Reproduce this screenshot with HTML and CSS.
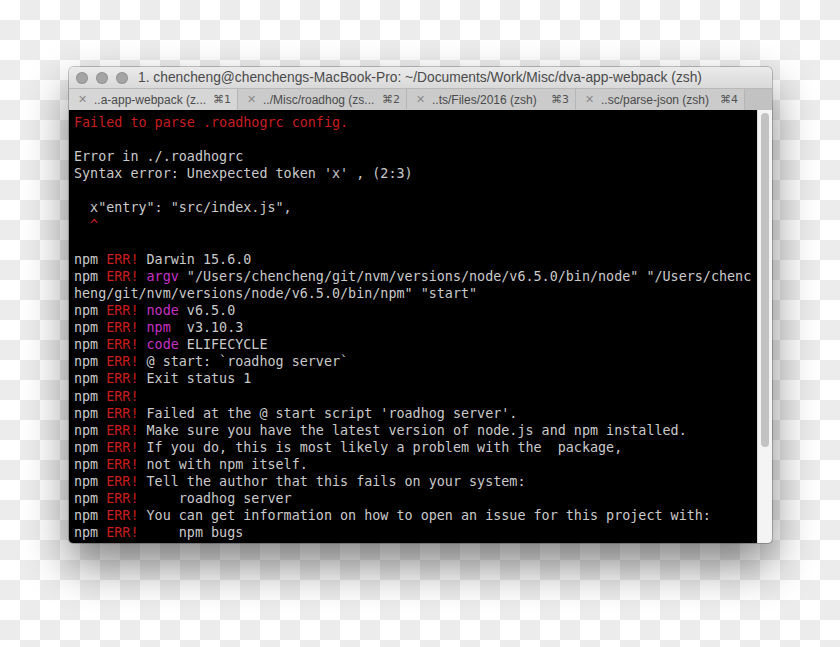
FILE: index.html
```html
<!DOCTYPE html>
<html lang="en">
<head>
    <meta charset="UTF-8">
    <meta name="viewport" content="width=device-width, initial-scale=1.0">
    <title>Terminal</title>
    <link rel="stylesheet" href="styles.css">
</head>
<body>
    <div class="window">
        <!-- Title bar -->
        <div class="titlebar">
            <div class="lights">
                <span class="light"></span>
                <span class="light"></span>
                <span class="light"></span>
            </div>
            <div class="title">1. chencheng@chenchengs-MacBook-Pro: ~/Documents/Work/Misc/dva-app-webpack (zsh)</div>
        </div>

        <!-- Tabs -->
        <div class="tabbar">
            <div class="tab active">
                <span class="tab-close">&#x2715;</span>
                <span class="tab-name">..a-app-webpack (z...</span>
                <span class="tab-key">&#x2318;1</span>
            </div>
            <div class="tab">
                <span class="tab-close">&#x2715;</span>
                <span class="tab-name">../Misc/roadhog (zs...</span>
                <span class="tab-key">&#x2318;2</span>
            </div>
            <div class="tab">
                <span class="tab-close">&#x2715;</span>
                <span class="tab-name">..ts/Files/2016 (zsh)</span>
                <span class="tab-key">&#x2318;3</span>
            </div>
            <div class="tab">
                <span class="tab-close">&#x2715;</span>
                <span class="tab-name">..sc/parse-json (zsh)</span>
                <span class="tab-key">&#x2318;4</span>
            </div>
            <div class="tab-rest"></div>
        </div>

        <!-- Terminal output -->
        <div class="screen">
            <div class="output">
                <div class="line red">Failed to parse .roadhogrc config.</div>
                <div class="line"></div>
                <div class="line">Error in ./.roadhogrc</div>
                <div class="line">Syntax error: Unexpected token 'x' , (2:3)</div>
                <div class="line"></div>
                <div class="line">  x"entry": "src/index.js",</div>
                <div class="line red">  ^</div>
                <div class="line"></div>
                <div class="line">npm <span class="red">ERR!</span> Darwin 15.6.0</div>
                <div class="line">npm <span class="red">ERR!</span> <span class="pink">argv</span> "/Users/chencheng/git/nvm/versions/node/v6.5.0/bin/node" "/Users/chenc</div>
                <div class="line">heng/git/nvm/versions/node/v6.5.0/bin/npm" "start"</div>
                <div class="line">npm <span class="red">ERR!</span> <span class="pink">node</span> v6.5.0</div>
                <div class="line">npm <span class="red">ERR!</span> <span class="pink">npm</span>  v3.10.3</div>
                <div class="line">npm <span class="red">ERR!</span> <span class="pink">code</span> ELIFECYCLE</div>
                <div class="line">npm <span class="red">ERR!</span> @ start: `roadhog server`</div>
                <div class="line">npm <span class="red">ERR!</span> Exit status 1</div>
                <div class="line">npm <span class="red">ERR!</span></div>
                <div class="line">npm <span class="red">ERR!</span> Failed at the @ start script 'roadhog server'.</div>
                <div class="line">npm <span class="red">ERR!</span> Make sure you have the latest version of node.js and npm installed.</div>
                <div class="line">npm <span class="red">ERR!</span> If you do, this is most likely a problem with the  package,</div>
                <div class="line">npm <span class="red">ERR!</span> not with npm itself.</div>
                <div class="line">npm <span class="red">ERR!</span> Tell the author that this fails on your system:</div>
                <div class="line">npm <span class="red">ERR!</span>     roadhog server</div>
                <div class="line">npm <span class="red">ERR!</span> You can get information on how to open an issue for this project with:</div>
                <div class="line">npm <span class="red">ERR!</span>     npm bugs</div>
            </div>
            <div class="scrollbar">
                <div class="thumb"></div>
            </div>
        </div>
    </div>
</body>
</html>
```

FILE: styles.css
```css
/* Transparent-style checker background */
body {
    margin: 0;
    padding: 67px 0 0 69px;
    min-height: 647px;
    box-sizing: border-box;
    background: repeating-conic-gradient(#ececec 0 25%, #ffffff 0 50%) 0 0 / 40px 40px;
    font-family: "Liberation Sans", Arial, sans-serif;
}

.window {
    width: 703px;
    height: 476px;
    display: flex;
    flex-direction: column;
    border-radius: 5px 5px 4px 4px;
    overflow: hidden;
    box-shadow: 0 0 0 1px rgba(0, 0, 0, 0.22), 0 22px 45px rgba(0, 0, 0, 0.48);
}

.titlebar {
    height: 21px;
    display: flex;
    align-items: center;
    background: linear-gradient(#ebebeb, #d9d9d9);
    padding-left: 7px;
}

.lights {
    display: flex;
    gap: 8px;
    margin-right: 10px;
}

.light {
    width: 12px;
    height: 12px;
    border-radius: 50%;
    background-color: #a4a4a4;
    box-shadow: inset 0 0 0 1px rgba(0, 0, 0, 0.12);
}

.title {
    font-size: 13.8px;
    color: #4b4b4b;
    white-space: nowrap;
}

.tabbar {
    height: 22px;
    display: flex;
    background-color: #c8c8c8;
    border-top: 1px solid #b9b9b9;
    box-sizing: border-box;
}

.tab {
    width: 169px;
    display: flex;
    align-items: center;
    font-size: 12px;
    color: #4a4a4a;
    background-color: #cbcbcb;
    border-right: 1px solid #b5b5b5;
    box-sizing: border-box;
    padding: 0 6px 0 9px;
    white-space: nowrap;
}

.tab.active {
    background-color: #d6d6d6;
}

.tab-close {
    color: #8a8a8a;
    font-size: 11px;
    width: 13px;
    margin-right: 3px;
    flex-shrink: 0;
}

.tab-name {
    flex-grow: 1;
    flex-shrink: 0;
}

.tab-key {
    color: #555;
    margin-left: 4px;
    font-family: "DejaVu Sans", sans-serif;
    font-size: 11px;
    flex-shrink: 0;
}

.tab-rest {
    flex-grow: 1;
    background-color: #c2c2c2;
}

.screen {
    flex-grow: 1;
    display: flex;
    background-color: #000;
}

.output {
    flex-grow: 1;
    padding: 4px 0 0 5px;
    font-family: "DejaVu Sans Mono", monospace;
    font-size: 13.4px;
    color: #cacaca;
    overflow: hidden;
}

.line {
    height: 17.1px;
    line-height: 17.1px;
    white-space: pre;
}

.red {
    color: #c81d1d;
}

.pink {
    color: #c732c5;
}

.scrollbar {
    width: 15px;
    background-color: #f4f4f4;
    border-left: 1px solid #dcdcdc;
    box-sizing: border-box;
    padding: 3px 3px 0 3px;
}

.thumb {
    height: 334px;
    border-radius: 4px;
    background-color: #c2c2c2;
}
```
